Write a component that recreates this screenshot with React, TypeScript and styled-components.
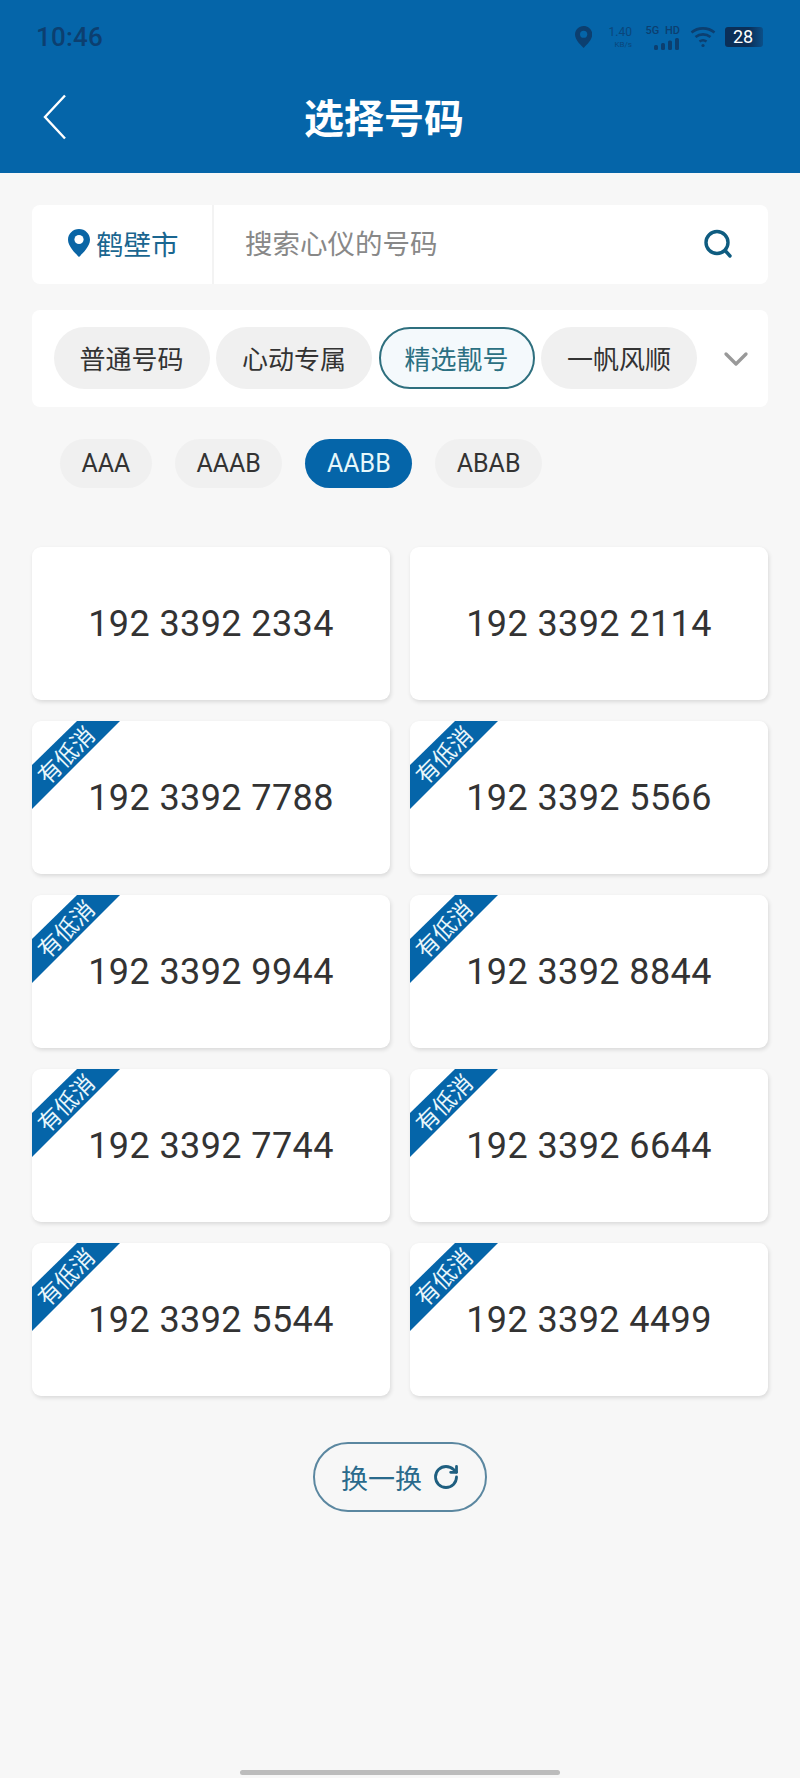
import React from "react";
import styled, { createGlobalStyle } from "styled-components";
import { ChevronDown, RotateCw } from "lucide-react";

const Global = createGlobalStyle`
  html, body { margin: 0; padding: 0; background: #f7f7f7; }
  * { box-sizing: border-box; }
  body { font-family: "Noto Sans CJK SC", Roboto, sans-serif; }
`;

const Page = styled.div`
  width: 800px;
  height: 1778px;
  display: flex;
  flex-direction: column;
  background: #f7f7f7;
  overflow: hidden;
`;

const Header = styled.header`
  height: 173px;
  background: #0565a9;
  padding-bottom: 11px;
`;

const StatusBar = styled.div`
  height: 74px;
  display: flex;
  align-items: center;
  justify-content: space-between;
  padding: 0 37px 0 36px;
  color: #0c3f70;
`;

const Time = styled.span`
  font-family: Roboto, sans-serif;
  font-size: 26px;
  font-weight: 500;
  letter-spacing: 0.2px;
`;

const StatusIcons = styled.div`
  display: flex;
  align-items: center;
`;

const Speed = styled.div`
  display: flex;
  flex-direction: column;
  align-items: flex-end;
  font-family: Roboto, sans-serif;
  margin-left: 14px;
  width: 26px;
  line-height: 1;
  font-size: 12px;
  opacity: 0.8;
  small { font-size: 8px; margin-top: 3px; }
`;

const Network = styled.div`
  display: flex;
  flex-direction: column;
  align-items: flex-end;
  margin-left: 11px;
  width: 37px;
  font-family: Roboto, sans-serif;
  font-size: 11px;
  font-weight: 500;
  line-height: 1;
  gap: 2px;
  word-spacing: 3px;
  white-space: nowrap;
`;

const Battery = styled.div`
  width: 38px;
  height: 20px;
  margin-left: 9px;
  border-radius: 3px;
  background: linear-gradient(90deg, #0b2f58 0 62%, #0b4f88 100%);
  color: #fff;
  font-family: Roboto, sans-serif;
  font-size: 18px;
  line-height: 20px;
  text-align: center;
  padding-right: 2px;
`;

const Nav = styled.div`
  height: 88px;
  position: relative;
  display: flex;
  align-items: center;
  padding-left: 42px;
`;

const Title = styled.h1`
  position: absolute;
  left: 304px;
  margin: 0 0 4px;
  color: #fff;
  font-size: 40px;
  font-weight: 700;
  line-height: 1;
`;

const Main = styled.main`
  flex: 1;
  display: flex;
  flex-direction: column;
  padding: 32px 32px 0;
`;

const SearchCard = styled.div`
  height: 79px;
  display: flex;
  align-items: center;
  background: #fff;
  border-radius: 8px;
`;

const City = styled.div`
  width: 182px;
  height: 100%;
  display: flex;
  align-items: center;
  padding: 0 0 3px 36px;
  gap: 6px;
  border-right: 2px solid #f3f3f3;
  color: #1a6690;
  font-size: 27.5px;
`;

const Placeholder = styled.div`
  flex: 1;
  padding: 0 0 5px 31px;
  font-size: 27.5px;
  color: #888;
`;

const SearchButton = styled.div`
  display: flex;
  margin: 0 35px 2px 0;
`;

const TabsCard = styled.div`
  height: 97px;
  margin-top: 26px;
  display: flex;
  align-items: center;
  gap: 6.5px;
  padding-left: 21.5px;
  background: #fff;
  border-radius: 8px;
`;

const Tab = styled.div<{ $active?: boolean }>`
  width: 156px;
  height: 62px;
  margin-bottom: 1px;
  display: flex;
  align-items: center;
  justify-content: center;
  padding-bottom: 2px;
  border-radius: 31px;
  font-size: 26px;
  background: ${(p) => (p.$active ? "#f4f9fc" : "#f0f0f0")};
  color: ${(p) => (p.$active ? "#2b7082" : "#333")};
  border: ${(p) => (p.$active ? "2px solid #2e6f7e" : "none")};
`;

const More = styled.div`
  display: flex;
  margin-left: 12px;
  color: #999;
`;

const SubTabs = styled.div`
  display: flex;
  gap: 23px;
  margin-top: 32px;
  padding-left: 28px;
`;

const SubTab = styled.div<{ $active?: boolean }>`
  height: 49px;
  min-width: 90px;
  padding: 0 21.5px;
  display: flex;
  align-items: center;
  justify-content: center;
  border-radius: 25px;
  font-family: Roboto, sans-serif;
  font-size: 25px;
  background: ${(p) => (p.$active ? "#0565a9" : "#f0f0f0")};
  color: ${(p) => (p.$active ? "#e6f8fb" : "#333")};
`;

const Grid = styled.div`
  display: grid;
  grid-template-columns: 358px 358px;
  grid-auto-rows: 153px;
  justify-content: space-between;
  row-gap: 21px;
  margin-top: 59px;
`;

const Card = styled.div`
  position: relative;
  display: flex;
  align-items: center;
  justify-content: center;
  background: #fff;
  border-radius: 9px;
  box-shadow: 1px 2px 4px rgba(0, 0, 0, 0.12);
  font-family: Roboto, sans-serif;
  font-size: 36px;
  letter-spacing: 0.4px;
  color: #333;
`;

const Ribbon = styled.div`
  position: absolute;
  left: 0;
  top: 0;
  width: 88px;
  height: 88px;
  background: #0565a9;
  clip-path: polygon(45px 0, 88px 0, 0 88px, 0 44px);
  display: flex;
  align-items: center;
  justify-content: center;
`;

const RibbonText = styled.span`
  font-family: "Noto Sans CJK SC", sans-serif;
  font-size: 23px;
  letter-spacing: 0;
  line-height: 1;
  color: #e8f6fb;
  transform: translate(-11px, -11px) rotate(-45deg);
  white-space: nowrap;
`;

const RefreshRow = styled.div`
  display: flex;
  justify-content: center;
  margin-top: 46px;
`;

const RefreshButton = styled.div`
  width: 174px;
  height: 70px;
  border: 2px solid #5b87a0;
  border-radius: 35px;
  display: flex;
  align-items: center;
  justify-content: center;
  gap: 10px;
  padding-left: 1px;
  font-size: 27px;
  color: #2a6a8c;
`;

const HomeBar = styled.div`
  width: 320px;
  height: 5px;
  margin: auto auto 3px;
  background: #bcbcbc;
  border-radius: 3px;
`;

const numbers = [
  ["192 3392 2334", false],
  ["192 3392 2114", false],
  ["192 3392 7788", true],
  ["192 3392 5566", true],
  ["192 3392 9944", true],
  ["192 3392 8844", true],
  ["192 3392 7744", true],
  ["192 3392 6644", true],
  ["192 3392 5544", true],
  ["192 3392 4499", true],
] as const;

const Pin = ({ size, fill, hole }: { size: number; fill: string; hole: string }) => (
  <svg width={(size * 22) / 28} height={size} viewBox="0 0 22 28">
    <path d="M11 0C4.9 0 0 4.8 0 10.8 0 18 8.6 25.5 11 28c2.4-2.5 11-10 11-17.2C22 4.8 17.1 0 11 0z" fill={fill} />
    <circle cx="11" cy="10.5" r="4.6" fill={hole} />
  </svg>
);

export default function App() {
  return (
    <Page>
      <Global />
      <Header>
        <StatusBar>
          <Time>10:46</Time>
          <StatusIcons>
            <Pin size={22} fill="#0c3f70" hole="#0565a9" />
            <Speed>
              <span>1.40</span>
              <small>KB/s</small>
            </Speed>
            <Network>
              <span>5G HD</span>
              <svg width="26" height="12" viewBox="0 0 26 12" fill="#0c3f70">
                <rect x="0" y="7" width="4" height="5" rx="1.5" />
                <rect x="7" y="5" width="4" height="7" rx="1.5" />
                <rect x="14" y="2.5" width="4" height="9.5" rx="1.5" />
                <rect x="21" y="0" width="4" height="12" rx="1.5" />
              </svg>
            </Network>
            <svg width="26" height="22" viewBox="0 0 26 22" fill="none" stroke="#0c3f70" strokeWidth="2.6" style={{ marginLeft: 10 }}>
              <path d="M1.5 6.5C8 1 18 1 24.5 6.5" />
              <path d="M5.5 11C10 7.5 16 7.5 20.5 11" />
              <path d="M9.5 15.5c2.2-1.6 4.8-1.6 7 0" />
              <circle cx="13" cy="19.5" r="1.6" fill="#0c3f70" stroke="none" />
            </svg>
            <Battery>28</Battery>
          </StatusIcons>
        </StatusBar>
        <Nav>
          <svg width="26" height="46" viewBox="0 0 26 46" fill="none" stroke="#fff" strokeWidth="2.4" style={{ marginBottom: 2 }}>
            <path d="M23 1.5 3 23l20 21.5" />
          </svg>
          <Title>选择号码</Title>
        </Nav>
      </Header>
      <Main>
        <SearchCard>
          <City>
            <Pin size={28} fill="#0a65a5" hole="#fff" />
            鹤壁市
          </City>
          <Placeholder>搜索心仪的号码</Placeholder>
          <SearchButton>
            <svg width="30" height="30" viewBox="0 0 30 30" fill="none" stroke="#0f5c80" strokeWidth="3.4" strokeLinecap="round">
              <circle cx="14" cy="13.5" r="11" />
              <path d="M22.5 22l4.5 5" />
            </svg>
          </SearchButton>
        </SearchCard>
        <TabsCard>
          <Tab>普通号码</Tab>
          <Tab>心动专属</Tab>
          <Tab $active>精选靓号</Tab>
          <Tab>一帆风顺</Tab>
          <More>
            <ChevronDown size={40} strokeWidth={2} />
          </More>
        </TabsCard>
        <SubTabs>
          <SubTab>AAA</SubTab>
          <SubTab>AAAB</SubTab>
          <SubTab $active>AABB</SubTab>
          <SubTab>ABAB</SubTab>
        </SubTabs>
        <Grid>
          {numbers.map(([n, low]) => (
            <Card key={n}>
              {low && (
                <Ribbon>
                  <RibbonText>有低消</RibbonText>
                </Ribbon>
              )}
              {n}
            </Card>
          ))}
        </Grid>
        <RefreshRow>
          <RefreshButton>
            换一换
            <RotateCw size={28} strokeWidth={2.4} color="#1f5f80" />
          </RefreshButton>
        </RefreshRow>
      </Main>
      <HomeBar />
    </Page>
  );
}
